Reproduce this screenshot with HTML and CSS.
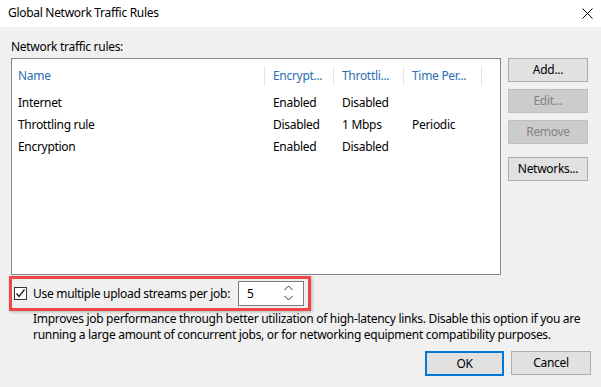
FILE: index.html
```html
<!DOCTYPE html>
<html>
<head>
<meta charset="utf-8">
<link rel="stylesheet" href="styles.css">
</head>
<body>
<div class="window">
  <div class="titlebar">
    <span class="title">Global Network Traffic Rules</span>
    <svg class="close" width="11" height="11" viewBox="0 0 11 11"><path d="M0.5 0.5 L10.5 10.5 M10.5 0.5 L0.5 10.5" stroke="#000" stroke-width="1" fill="none"/></svg>
  </div>
  <div class="content">
    <div class="label">Network traffic rules:</div>
    <div class="main">
      <div class="list">
        <div class="grid">
          <div class="hcell name">Name</div>
          <div class="hcell">Encrypt...</div>
          <div class="hcell">Throttli...</div>
          <div class="hcell">Time Per...</div>
          <div class="hfill"></div>
          <div class="spacer"></div>

          <div class="cell name">Internet</div>
          <div class="cell">Enabled</div>
          <div class="cell">Disabled</div>
          <div class="cell"></div>
          <div class="cell"></div>

          <div class="cell name">Throttling rule</div>
          <div class="cell">Disabled</div>
          <div class="cell">1 Mbps</div>
          <div class="cell">Periodic</div>
          <div class="cell"></div>

          <div class="cell name">Encryption</div>
          <div class="cell">Enabled</div>
          <div class="cell">Disabled</div>
          <div class="cell"></div>
          <div class="cell"></div>
        </div>
      </div>
      <div class="side">
        <div class="btn">Add...</div>
        <div class="btn disabled">Edit...</div>
        <div class="btn disabled">Remove</div>
        <div class="btn networks">Networks...</div>
      </div>
    </div>
    <div class="highlight">
      <span class="checkbox">
        <svg width="11" height="11" viewBox="0 0 11 11"><path d="M1.5 5.5 L4 8.5 L9.5 1.5" stroke="#1a1a1a" stroke-width="1.3" fill="none"/></svg>
      </span>
      <span class="optlabel">Use multiple upload streams per job:</span>
      <span class="spin">
        <span class="spinval">5</span>
        <span class="arrows">
          <svg width="9" height="6" viewBox="0 0 9 6"><path d="M0.5 5 L4.5 1 L8.5 5" stroke="#333" stroke-width="1" fill="none"/></svg>
          <svg width="9" height="6" viewBox="0 0 9 6"><path d="M0.5 1 L4.5 5 L8.5 1" stroke="#333" stroke-width="1" fill="none"/></svg>
        </span>
      </span>
    </div>
    <p class="desc">Improves job performance through better utilization of high-latency links. Disable this option if you are running a large amount of concurrent jobs, or for networking equipment compatibility purposes.</p>
    <div class="footer">
      <div class="btn ok">OK</div>
      <div class="btn">Cancel</div>
    </div>
  </div>
</div>
</body>
</html>
```
FILE: styles.css
```css
* { box-sizing: border-box; }
html, body { margin: 0; padding: 0; }
body {
  width: 601px;
  height: 387px;
  background: #f0f0f0;
  font-family: "Noto Sans", "Open Sans", sans-serif;
  font-size: 12px;
  letter-spacing: -0.3px;
  color: #000;
  overflow: hidden;
}
.window { width: 601px; height: 387px; }
.titlebar {
  height: 27px;
  background: #fff;
  display: flex;
  align-items: center;
  justify-content: space-between;
  padding: 0 8px 2px 8px;
}
.close { margin-top: 2px; }
.content { padding: 0 0 0 11px; }
.label { margin-top: 11px; height: 20px; line-height: 17px; }
.main { display: flex; gap: 7px; }
.list {
  width: 490px;
  height: 217px;
  background: #fff;
  border: 1px solid #828790;
  padding-top: 7px;
}
.grid {
  display: grid;
  grid-template-columns: 253px 69px 70px 78px 1fr;
  grid-template-rows: 20px 6px;
  grid-auto-rows: 22px;
}
.spacer { grid-column: 1 / -1; }
.hcell {
  height: 20px;
  line-height: 20px;
  color: #2a6fb0;
  padding-left: 8px;
  border-right: 1px solid #e5e5e5;
  white-space: nowrap;
  overflow: hidden;
}
.cell {
  line-height: 22px;
  padding-left: 8px;
  white-space: nowrap;
}
.hcell.name, .cell.name { padding-left: 6px; }
.side { display: flex; flex-direction: column; width: 80px; gap: 7px; }
.btn {
  height: 24px;
  width: 80px;
  border: 1px solid #adadad;
  background: #e1e1e1;
  display: flex;
  align-items: center;
  justify-content: center;
  padding-bottom: 1px;
}
.btn.disabled { background: #cccccc; border-color: #bfbfbf; color: #838383; }
.btn.networks { margin-top: 6px; }
.highlight {
  display: flex;
  align-items: center;
  width: 302px;
  height: 35px;
  margin-left: -2px;
  margin-top: 1px;
  border: 3px solid #ec4848;
  box-shadow: 1px 1px 3px rgba(0,0,0,0.25);
  padding-left: 2px;
}
.checkbox {
  width: 13px;
  height: 13px;
  border: 1px solid #333;
  background: #fff;
  display: flex;
  align-items: center;
  justify-content: center;
}
.optlabel { margin-left: 6px; white-space: nowrap; }
.spin {
  margin-left: 8px;
  width: 66px;
  height: 25px;
  background: #fff;
  border: 1px solid #7a7a7a;
  display: flex;
  align-items: center;
  justify-content: space-between;
  padding: 0 10px 1px 8px;
}
.arrows { display: flex; flex-direction: column; gap: 4px; }
.arrows svg { display: block; }
.desc {
  margin: 0 0 0 22px;
  width: 560px;
  line-height: 16px;
}
.footer {
  display: flex;
  justify-content: flex-end;
  gap: 7px;
  margin-top: 8px;
  padding-right: 10px;
}
.btn.ok { border: 2px solid #0078d7; width: 79px; height: 25px; }
```
